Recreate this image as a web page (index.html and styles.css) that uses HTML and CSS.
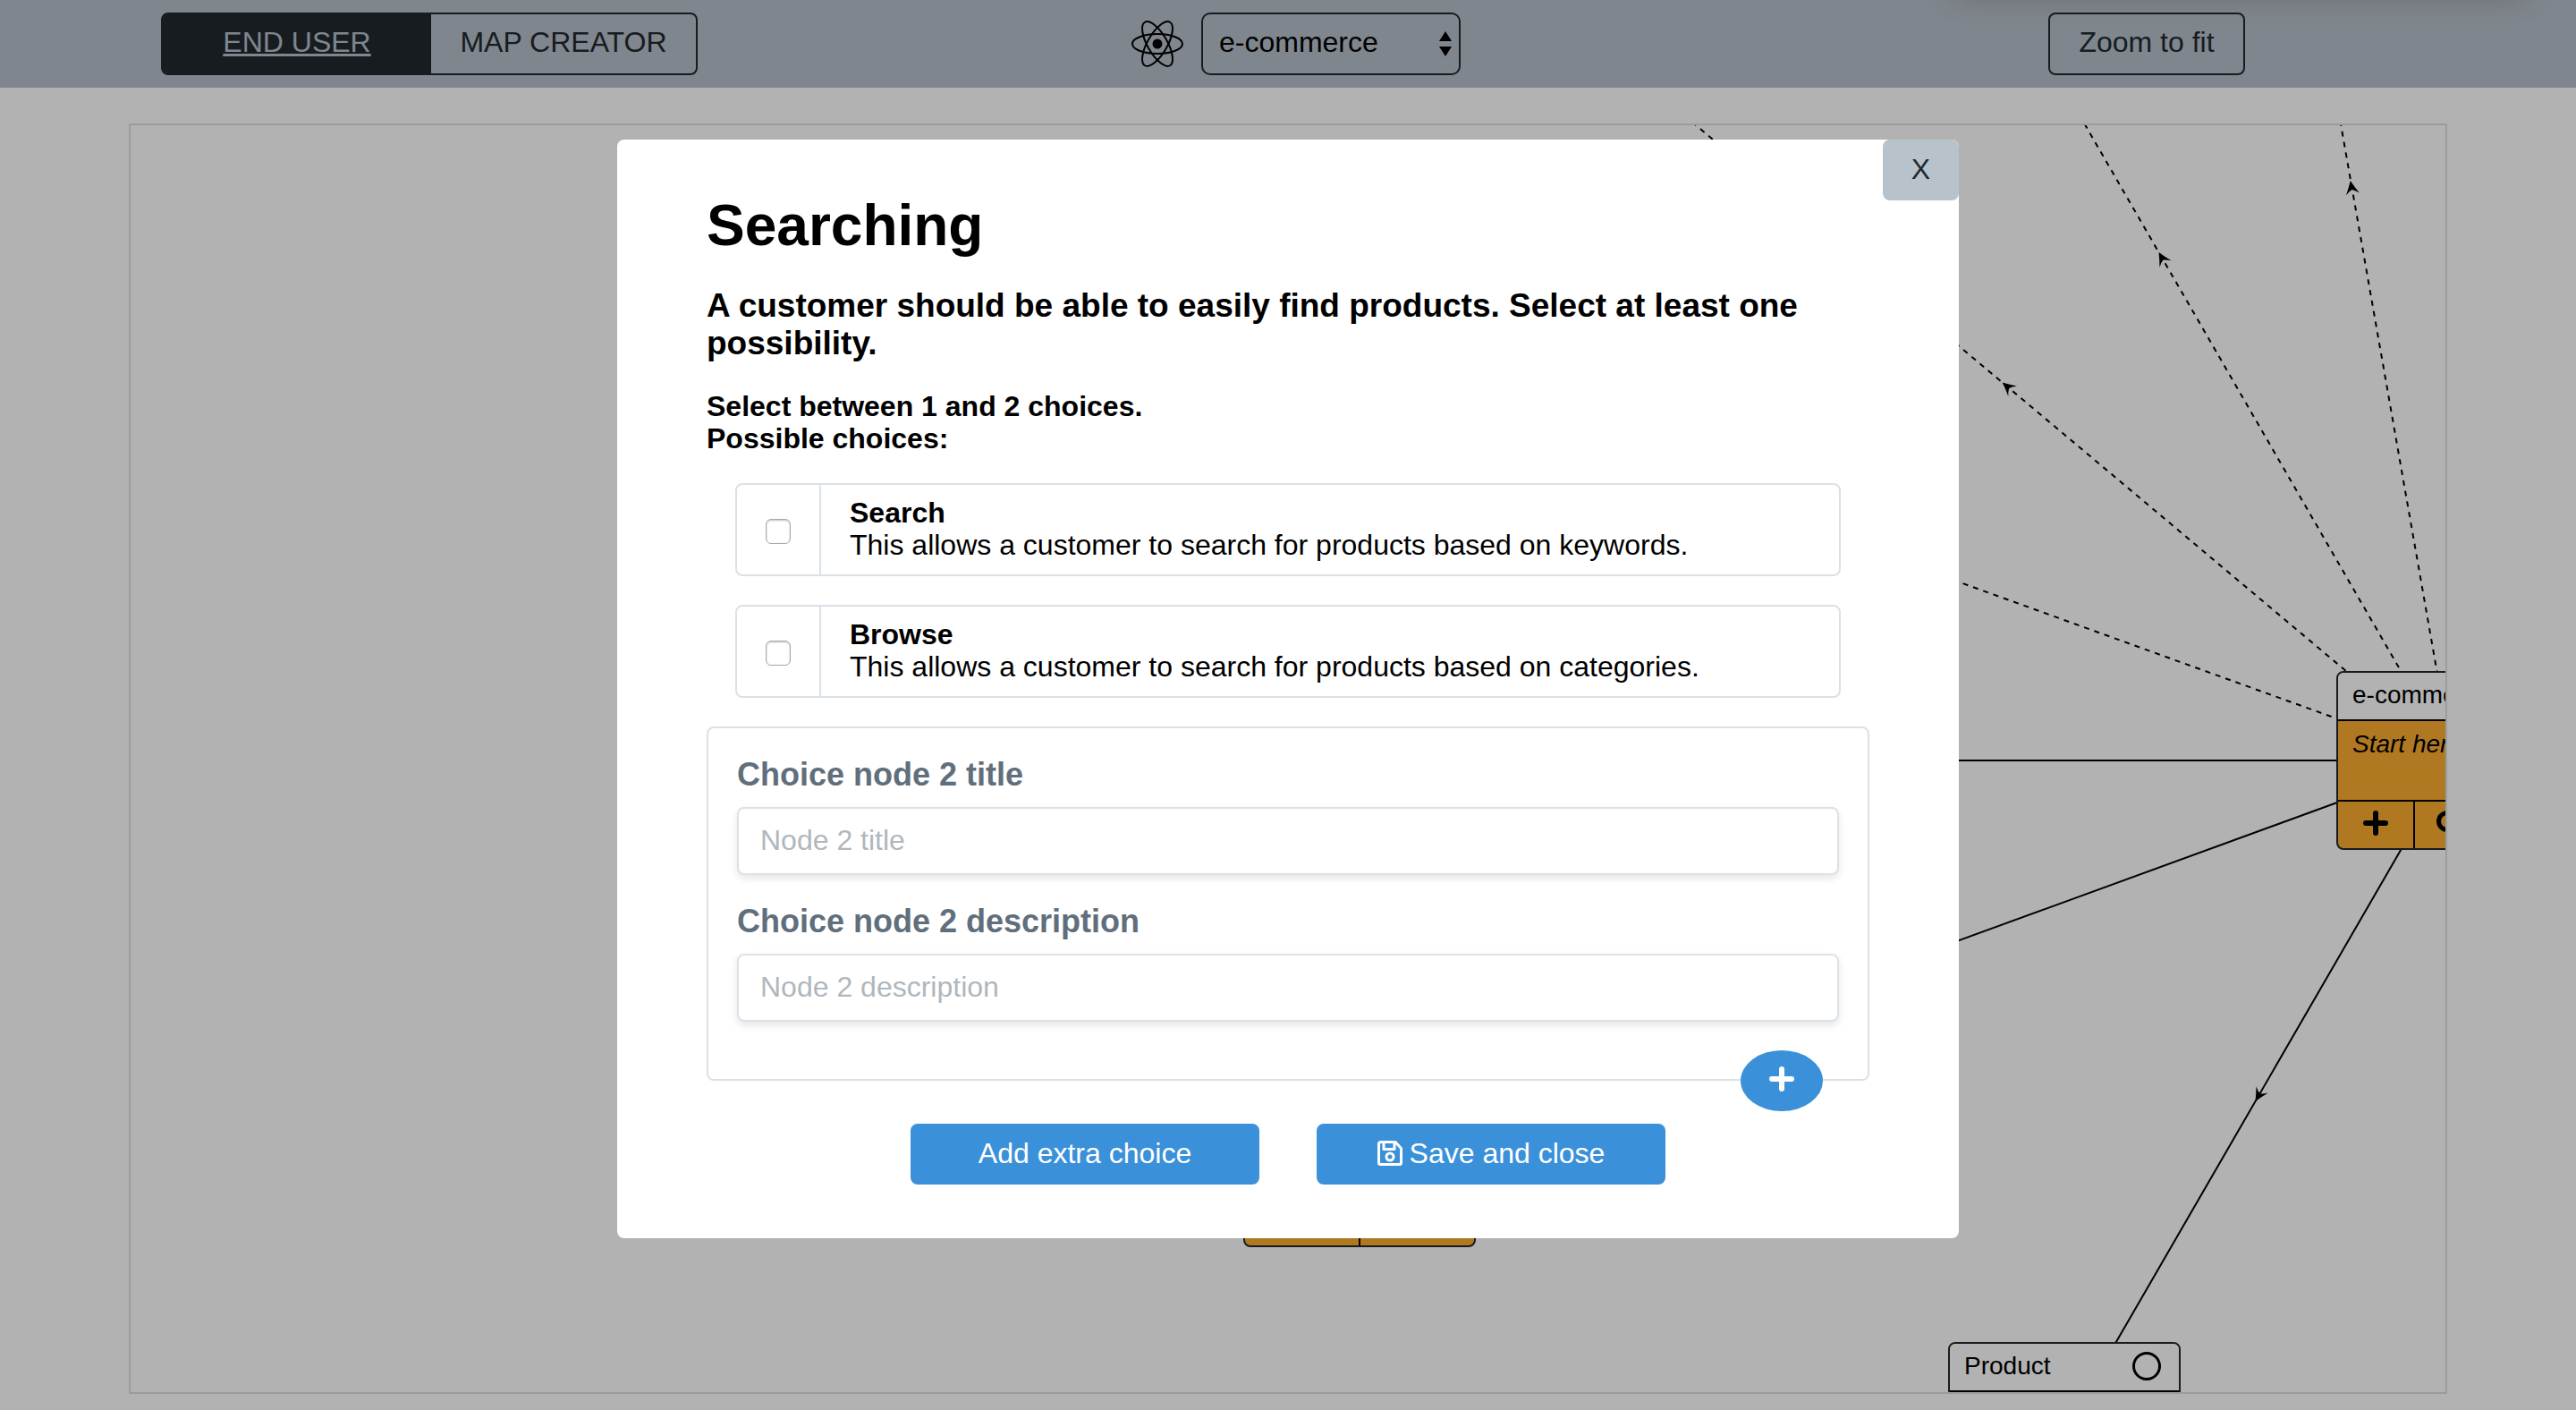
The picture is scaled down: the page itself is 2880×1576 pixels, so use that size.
FILE: index.html
```html
<!DOCTYPE html>
<html lang="en">
<head>
<meta charset="utf-8">
<title>Decision map</title>
<link rel="stylesheet" href="styles.css">
</head>
<body>
<header class="topbar">
  <nav class="mode-switch" aria-label="Mode">
    <a class="mode mode-active" href="#end-user">END USER</a>
    <a class="mode" href="#map-creator">MAP CREATOR</a>
  </nav>
  <div class="map-picker">
    <svg class="atom" viewBox="0 0 58 52" aria-hidden="true">
      <g fill="none" stroke="#000" stroke-width="2">
        <ellipse cx="29" cy="26" rx="28" ry="11"/>
        <ellipse cx="29" cy="26" rx="28" ry="11" transform="rotate(60 29 26)"/>
        <ellipse cx="29" cy="26" rx="28" ry="11" transform="rotate(120 29 26)"/>
      </g>
      <circle cx="29" cy="26" r="5.500"/>
    </svg>
    <div class="select-wrap">
      <select class="select" aria-label="Map">
        <option>e-commerce</option>
        <option>blog</option>
      </select>
      <svg class="select-arrows" viewBox="0 0 14 28" aria-hidden="true"><path d="M7 0l7 11H0zM7 28l7-11H0z"/></svg>
    </div>
  </div>
  <button class="zoom-button" type="button">Zoom to fit</button>
</header>

<main class="canvas">
  <svg class="edges" aria-hidden="true">
    <defs>
      <path id="tip" d="M7 0Q0 3-8 7.500Q-4 3-3 0Q-4-3-8-7.500Q0-3 7 0z"/>
    </defs>
    <g fill="none" stroke="#000" stroke-width="2">
      <path d="M2596 710H1600"/>
      <path d="M2596 710L1600 1073"/>
      <path d="M2596 710L2162 1460"/>
      <g stroke-dasharray="6 6">
        <path d="M2596 710L2370 -576"/>
        <path d="M2596 710L1946 -414"/>
        <path d="M2596 710L1600 -126"/>
        <path d="M2596 710L1600 350"/>
      </g>
    </g>
    <use href="#tip" transform="translate(2483 69) rotate(260)"/>
    <use href="#tip" transform="translate(2271 148) rotate(240)"/>
    <use href="#tip" transform="translate(2098 292) rotate(220)"/>
    <use href="#tip" transform="translate(2379 1085) rotate(120)"/>
  </svg>

  <section class="node node-search">
    <h2 class="node-title">Searching</h2>
    <p class="node-text"></p>
    <div class="node-actions"><span class="node-action"></span><span class="node-action"></span></div>
  </section>

  <section class="node node-start">
    <h2 class="node-title">e-commerce</h2>
    <p class="node-text">Start here</p>
    <div class="node-actions">
      <button class="node-action" type="button" aria-label="Add"><svg class="icon" viewBox="0 0 28 28"><path d="M14 3v22M3 14h22" stroke="#000" stroke-width="6" stroke-linecap="round"/></svg></button>
      <button class="node-action" type="button" aria-label="Inspect"><svg class="icon icon-wide" viewBox="0 0 36 28" fill="none" stroke="#000" stroke-width="5"><circle cx="12" cy="12" r="9.500"/><path d="M19 19l7 7"/></svg></button>
      <button class="node-action" type="button" aria-label="Edit"></button>
    </div>
  </section>

  <section class="node node-product">
    <h2 class="node-title">Product<svg class="ring" viewBox="0 0 32 32"><circle cx="16" cy="16" r="14.500" fill="none" stroke="#000" stroke-width="3"/></svg></h2>
    <p class="node-text"></p>
  </section>
</main>

<div class="overlay">
  <form class="modal" role="dialog" aria-labelledby="modal-title">
    <button class="close" type="button" aria-label="Close">X</button>
    <h1 class="title" id="modal-title">Searching</h1>
    <p class="lead">A customer should be able to easily find products. Select at least one possibility.</p>
    <p class="rule">Select between 1 and 2 choices.<br>Possible choices:</p>

    <div class="choices">
      <label class="choice">
        <span class="choice-tick"><input class="tick" type="checkbox"></span>
        <span class="choice-text"><strong>Search</strong><br>This allows a customer to search for products based on keywords.</span>
      </label>
      <label class="choice">
        <span class="choice-tick"><input class="tick" type="checkbox"></span>
        <span class="choice-text"><strong>Browse</strong><br>This allows a customer to search for products based on categories.</span>
      </label>
    </div>

    <div class="extra">
      <label class="label" for="node-title">Choice node 2 title</label>
      <input class="field" id="node-title" type="text" placeholder="Node 2 title">
      <label class="label" for="node-description">Choice node 2 description</label>
      <input class="field" id="node-description" type="text" placeholder="Node 2 description">
      <button class="add" type="button" aria-label="Add node"><svg class="icon" viewBox="0 0 28 28"><path d="M14 3v22M3 14h22" stroke="#fff" stroke-width="6" stroke-linecap="round"/></svg></button>
    </div>

    <div class="actions">
      <button class="action" type="button">Add extra choice</button>
      <button class="action" type="submit"><svg class="icon" viewBox="0 0 28 28" fill="none" stroke="#fff" stroke-width="3" stroke-linejoin="round"><path d="M1.500 3.500a2 2 0 0 1 2-2H20l6.500 7V24.500a2 2 0 0 1-2 2h-21a2 2 0 0 1-2-2z"/><path d="M7 2v7.500h12V2"/><circle cx="14" cy="18" r="4"/></svg>Save and close</button>
    </div>
  </form>
</div>
</body>
</html>
```
FILE: styles.css
```css
* {
  box-sizing: border-box;
}

body {
  display: flex;
  flex-direction: column;
  min-height: 100vh;
  margin: 0;
  background: #fff;
  color: #000;
  font-family: "Liberation Sans", Arial, sans-serif;
  font-size: 32px;
  line-height: 36px;
}

h1, h2, p {
  margin: 0;
}

button, select, input {
  margin: 0;
  color: inherit;
  font: inherit;
}

.icon {
  display: block;
  width: 28px;
  height: 28px;
}

.icon-wide {
  width: 36px;
}

/* Top bar */
.topbar {
  position: relative;
  display: grid;
  grid-template-columns: repeat(3, 1fr);
  align-items: center;
  justify-items: center;
  padding: 14px 0;
  overflow: hidden;
  background: #b8c0ca;
}

.topbar::after {
  position: absolute;
  top: -24px;
  right: 56px;
  width: 640px;
  height: 16px;
  box-shadow: 0 4px 32px rgba(0, 0, 0, 0.25);
  content: "";
}

.mode-switch {
  display: grid;
  grid-template-columns: 300px 1fr;
  width: 600px;
  border: 2px solid #22292f;
  border-radius: 8px;
}

.mode {
  padding: 13px 16px 17px;
  color: #22292f;
  text-align: center;
  text-decoration: none;
}

.mode-active {
  border-radius: 5px 0 0 5px;
  background: #22292f;
  color: #b8c0ca;
  text-decoration: underline;
}

.map-picker {
  display: flex;
  align-items: center;
  gap: 20px;
  padding-left: 18px;
}

.atom {
  width: 58px;
  height: 52px;
}

.select-wrap {
  position: relative;
}

.select {
  display: block;
  width: 290px;
  height: 70px;
  padding: 0 40px 4px 18px;
  border: 2px solid #22292f;
  border-radius: 10px;
  appearance: none;
  background: transparent;
}

.select-arrows {
  position: absolute;
  top: 21px;
  right: 10px;
  width: 14px;
  height: 28px;
}

.zoom-button {
  padding: 13px 32px 17px;
  border: 2px solid #22292f;
  border-radius: 8px;
  background: transparent;
  color: #22292f;
}

/* Map canvas */
.canvas {
  position: relative;
  flex: 1;
  margin: 40px 5% 18px;
  overflow: hidden;
  border: 2px solid #dae1e7;
}

.edges {
  position: absolute;
  inset: 0;
  width: 100%;
  height: 100%;
}

.node {
  position: absolute;
  display: flex;
  flex-direction: column;
  width: 260px;
  height: 200px;
  overflow: hidden;
  border: 2px solid #22292f;
  border-radius: 8px;
  background: #fdae30;
}

.node-search {
  top: 1054px;
  left: 1244px;
}

.node-start {
  top: 610px;
  left: 2466px;
}

.node-product {
  top: 1360px;
  left: 2032px;
}

.node-title {
  display: flex;
  align-items: center;
  justify-content: space-between;
  height: 54px;
  padding: 0 20px 2px 16px;
  border-bottom: 2px solid #000;
  background: #fff;
  font-size: 28px;
  font-weight: 400;
}

.ring {
  width: 32px;
  height: 32px;
}

.node-text {
  flex: 1;
  padding: 8px 16px;
  font-size: 28px;
  font-style: italic;
}

.node-actions {
  display: flex;
  height: 54px;
  border-top: 2px solid #000;
}

.node-action {
  display: flex;
  flex: 1;
  align-items: center;
  justify-content: center;
  padding: 0 0 4px;
  border: 0;
  background: none;
}

.node-action + .node-action {
  border-left: 2px solid #000;
}

/* Dialog */
.overlay {
  position: fixed;
  inset: 0;
  padding: 156px 32px 32px;
  overflow: auto;
  background: rgba(0, 0, 0, 0.3);
}

.modal {
  position: relative;
  max-width: 1500px;
  margin: 0 auto;
  padding: 60px 100px;
  border-radius: 8px;
  background: #fff;
}

.close {
  position: absolute;
  top: 0;
  right: 0;
  padding: 15px 32px 17px;
  border: 0;
  border-radius: 8px;
  background: #b7c2ca;
  color: #22292f;
}

.title {
  font-size: 64px;
  line-height: 72px;
}

.lead {
  margin-top: 33px;
  font-size: 37px;
  font-weight: 700;
  line-height: 42px;
}

.rule {
  margin-top: 31px;
  font-weight: 700;
}

.choices {
  display: flex;
  flex-direction: column;
  gap: 32px;
  margin: 32px;
}

.choice {
  display: flex;
  border: 2px solid #dae1e7;
  border-radius: 8px;
}

.choice-tick {
  display: flex;
  align-items: center;
  padding: 4px 32px 0;
  border-right: 2px solid #dae1e7;
}

.tick {
  width: 28px;
  height: 28px;
  border: 1px solid #a9a9a9;
  border-radius: 6px;
  appearance: none;
  background: #fff;
  box-shadow: inset 0 1px 2px rgba(0, 0, 0, 0.25);
}

.tick:checked {
  background: #3b91d9;
}

.choice-text {
  padding: 13px 32px 15px;
}

.extra {
  position: relative;
  padding: 32px 32px 64px;
  border: 2px solid #dae1e7;
  border-radius: 8px;
}

.label {
  display: block;
  margin-bottom: 16px;
  color: #606f7b;
  font-size: 36px;
  font-weight: 700;
  line-height: 40px;
}

.field {
  display: block;
  width: 100%;
  height: 76px;
  padding: 0 24px 2px;
  border: 2px solid #dae1e7;
  border-radius: 8px;
  background: #fff;
  box-shadow: 0 4px 8px rgba(0, 0, 0, 0.1);
}

.field + .label {
  margin-top: 32px;
}

.field::placeholder {
  color: #b0b7bd;
  opacity: 1;
}

.add {
  position: absolute;
  right: 50px;
  bottom: -36px;
  padding: 18px 32px 22px;
  border: 0;
  border-radius: 50%;
  background: #3b91d9;
}

.actions {
  display: flex;
  justify-content: center;
  gap: 64px;
  margin-top: 48px;
}

.action {
  display: flex;
  align-items: center;
  justify-content: center;
  gap: 8px;
  width: 390px;
  padding: 15px 32px 17px;
  border: 0;
  border-radius: 8px;
  background: #3b91d9;
  color: #fff;
}
```
